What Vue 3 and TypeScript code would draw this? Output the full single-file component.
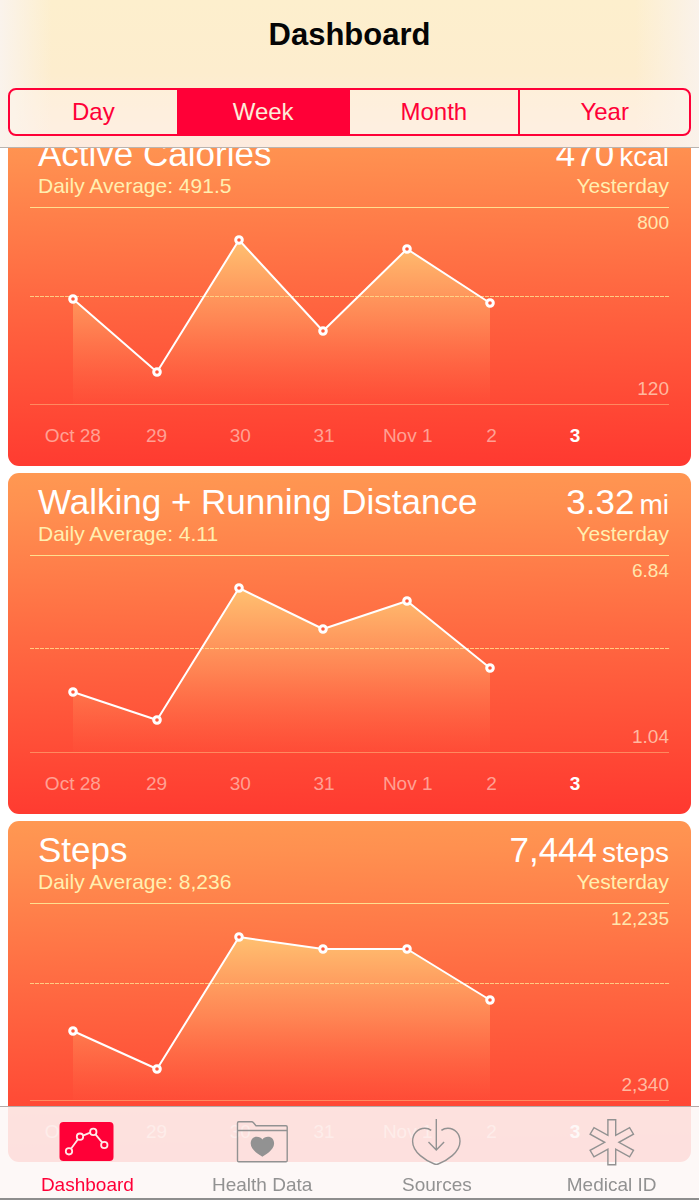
<script setup lang="ts">
import { ref } from 'vue'

interface Metric {
  id: string
  name: string
  average: string
  value: string
  unit: string
  max: string
  min: string
  averageLevel: number
  levels: number[]
}

const ranges = ['Day', 'Week', 'Month', 'Year']
const activeRange = ref('Week')
const activeTab = ref('dashboard')

const days = ['Oct 28', '29', '30', '31', 'Nov 1', '2', '3']
const dayX = [43, 127, 209, 293, 377, 460]
const chartHeight = 196

const metrics: Metric[] = [
  {
    id: 'calories', name: 'Active Calories', average: '491.5', value: '470', unit: 'kcal',
    max: '800', min: '120', averageLevel: 88.5, levels: [91, 164, 32, 123, 41, 95],
  },
  {
    id: 'distance', name: 'Walking + Running Distance', average: '4.11', value: '3.32', unit: 'mi',
    max: '6.84', min: '1.04', averageLevel: 92.5, levels: [136, 164, 32, 73, 45, 112],
  },
  {
    id: 'steps', name: 'Steps', average: '8,236', value: '7,444', unit: 'steps',
    max: '12,235', min: '2,340', averageLevel: 79.5, levels: [127, 165, 33, 45, 45, 96],
  },
]

function linePoints(levels: number[]): string {
  return levels.map((y, i) => `${dayX[i]},${y}`).join(' ')
}

function areaPoints(levels: number[]): string {
  const last = dayX[levels.length - 1]
  return `${dayX[0]},${chartHeight} ${linePoints(levels)} ${last},${chartHeight}`
}
</script>

<template>
  <div class="screen">
    <header class="top-bar">
      <h1 class="title">Dashboard</h1>
      <div class="segments" role="group" aria-label="Time range">
        <button
          v-for="range in ranges"
          :key="range"
          type="button"
          class="segment"
          :class="{ active: range === activeRange }"
          :aria-pressed="range === activeRange"
          @click="activeRange = range"
        >{{ range }}</button>
      </div>
    </header>

    <main class="cards">
      <article v-for="metric in metrics" :key="metric.id" class="card">
        <div class="card-head">
          <h2 class="name">{{ metric.name }}</h2>
          <p class="value">{{ metric.value }}<span class="unit">{{ metric.unit }}</span></p>
          <p class="note">Daily Average: {{ metric.average }}</p>
          <p class="note end">Yesterday</p>
        </div>
        <div class="chart">
          <svg class="plot" :viewBox="`0 0 639 ${chartHeight}`" role="img" :aria-label="metric.name">
            <defs>
              <linearGradient :id="`fill-${metric.id}`" gradientUnits="userSpaceOnUse" x1="0" y1="32" x2="0" :y2="chartHeight">
                <stop offset="0" stop-color="#ffc573" stop-opacity="0.95" />
                <stop offset="0.5" stop-color="#ffa868" stop-opacity="0.5" />
                <stop offset="1" stop-color="#ff7a50" stop-opacity="0.04" />
              </linearGradient>
            </defs>
            <polygon :points="areaPoints(metric.levels)" :fill="`url(#fill-${metric.id})`" />
            <line class="average" x1="0" x2="639" :y1="metric.averageLevel" :y2="metric.averageLevel" />
            <polyline class="trend" :points="linePoints(metric.levels)" />
            <circle v-for="(y, i) in metric.levels" :key="i" class="dot" :cx="dayX[i]" :cy="y" r="3.3" />
          </svg>
          <div class="scale">
            <span class="max">{{ metric.max }}</span>
            <span class="min">{{ metric.min }}</span>
          </div>
        </div>
        <ol class="days">
          <li v-for="(day, i) in days" :key="day" :class="{ today: i === days.length - 1 }">{{ day }}</li>
        </ol>
      </article>
    </main>

    <nav class="tab-bar" aria-label="Sections">
      <a href="#dashboard" class="tab" :class="{ active: activeTab === 'dashboard' }" @click="activeTab = 'dashboard'">
        <svg class="icon" viewBox="0 0 56 50" aria-hidden="true">
          <rect x="0.5" y="5" width="54" height="39" rx="4" fill="currentColor" />
          <g fill="none" stroke="#ffe9e8" stroke-width="1.8">
            <path d="M12 31.7 19 22.3M24 18.7 31.2 15.7M36.3 17.2 43.3 25.6" />
            <circle cx="10" cy="34.3" r="3.2" />
            <circle cx="21" cy="19.7" r="3.2" />
            <circle cx="34.3" cy="14.9" r="3.2" />
            <circle cx="45.3" cy="28" r="3.2" />
          </g>
        </svg>
        <span>Dashboard</span>
      </a>
      <a href="#health-data" class="tab" :class="{ active: activeTab === 'health' }" @click="activeTab = 'health'">
        <svg class="icon" viewBox="0 0 56 50" aria-hidden="true">
          <path class="stroke" d="M3.5 43.5V6a1.2 1.2 0 0 1 1.2-1.2H17.6q1.2 0 1.9 1L22 8.8H52a1.2 1.2 0 0 1 1.2 1.2V43.5a1.2 1.2 0 0 1-1.2 1.2H4.7A1.2 1.2 0 0 1 3.5 43.5ZM3.5 13.5H53.2" />
          <path fill="currentColor" d="M28.4 39.8C26.5 38.4 16.7 33.5 16.7 26.6C16.7 22.5 19.3 19.8 22.8 19.8C25.2 19.8 27.2 20.8 28.4 22.4C29.6 20.8 31.6 19.8 34 19.8C37.5 19.8 40.1 22.5 40.1 26.6C40.1 33.5 30.3 38.4 28.4 39.8Z" />
        </svg>
        <span>Health Data</span>
      </a>
      <a href="#sources" class="tab" :class="{ active: activeTab === 'sources' }" @click="activeTab = 'sources'">
        <svg class="icon" viewBox="0 0 56 50" aria-hidden="true">
          <path class="stroke" d="M22.2 13.4C20.5 12 18.2 11.2 15.7 11.2C8.8 11.2 3.6 16.8 3.6 24.2C3.6 35.5 17 43.8 25.4 47Q27.3 47.8 29.2 47C37.6 43.8 51 35.5 51 24.2C51 16.8 45.8 11.2 38.9 11.2C36.4 11.2 34.1 12 32.4 13.4" />
          <path class="stroke" d="M27.3 2V33M19.5 25 27.3 33 35.1 25" />
        </svg>
        <span>Sources</span>
      </a>
      <a href="#medical-id" class="tab" :class="{ active: activeTab === 'medical' }" @click="activeTab = 'medical'">
        <svg class="icon" viewBox="0 0 56 50" aria-hidden="true">
          <path class="stroke" d="M23.9 2.7H31.7V18.4L45.6 10.7 49.5 17.2 34.9 25.3 49.5 33.3 45.6 39.9 31.7 32.1V47.7H23.9V32.1L10 39.9 6.1 33.3 20.7 25.3 6.1 17.2 10 10.7 23.9 18.4Z" />
        </svg>
        <span>Medical ID</span>
      </a>
    </nav>
  </div>
</template>

<style>
html,
body {
  margin: 0;
  background: #fff;
}
</style>

<style scoped>
.screen {
  min-height: 100vh;
  background: #fff;
  font-family: "Liberation Sans", Arial, sans-serif;
}

.top-bar {
  position: sticky;
  top: 0;
  z-index: 2;
  box-sizing: border-box;
  padding: 15px 8px 11px;
  border-bottom: 1px solid #b9b4b0;
  background:
    linear-gradient(90deg, #faf3ec 0, rgba(250, 243, 236, 0) 52px calc(100% - 64px), #faf2ea 100%),
    linear-gradient(#fdefcd 0, #fdedce 50%, #fdebdf 100%);
}

.title {
  margin: 0 0 33px;
  color: #050505;
  font-size: 31px;
  line-height: 40px;
  font-weight: 700;
  text-align: center;
}

.segments {
  display: grid;
  grid-template-columns: repeat(4, 1fr);
}

.segment {
  height: 48px;
  margin: 0 0 0 -2px;
  padding: 0;
  border: 2px solid #ff0037;
  background: rgba(255, 245, 235, 0.35);
  color: #ff0037;
  font: inherit;
  font-size: 24px;
  cursor: pointer;
}

.segment:first-child {
  margin-left: 0;
  border-radius: 8px 0 0 8px;
}

.segment:last-child {
  border-radius: 0 8px 8px 0;
}

.segment.active {
  background: #ff0037;
  color: #fdecd8;
}

.cards {
  display: grid;
  gap: 7px;
  margin-top: -23px;
  padding: 0 8px 38px;
}

.card {
  padding: 11px 22px 18px;
  border-radius: 11px;
  background: linear-gradient(179deg, #ff9852 0%, #ff9050 10%, #ff6a42 47%, #ff4634 85%, #ff3830 100%);
  color: #fff;
}

.card-head {
  display: grid;
  grid-template-columns: 1fr auto;
  padding: 0 0 7px 8px;
}

.name,
.value {
  margin: 0;
  font-size: 35px;
  line-height: 36px;
  font-weight: 400;
}

.value,
.end {
  text-align: right;
}

.unit {
  margin-left: 5px;
  font-size: 28px;
  line-height: 28px;
}

.note {
  margin: 0;
  color: #ffefb0;
  font-size: 21px;
  line-height: 28px;
}

.chart {
  display: grid;
  border-top: 1px solid #ffdf8f;
  border-bottom: 1px solid rgba(255, 190, 130, 0.55);
}

.plot,
.scale {
  grid-area: 1 / 1;
}

.plot {
  display: block;
  width: 100%;
  height: auto;
}

.average {
  stroke: #ffdd8e;
  stroke-width: 1;
  stroke-dasharray: 4 1;
  opacity: 0.85;
}

.trend {
  fill: none;
  stroke: #fff;
  stroke-width: 2;
  stroke-linejoin: round;
}

.dot {
  fill: #ff5a3c;
  stroke: #fff;
  stroke-width: 3;
}

.scale {
  display: flex;
  flex-direction: column;
  justify-content: space-between;
  padding: 3px 0;
  font-size: 19px;
  line-height: 24px;
  text-align: right;
}

.max {
  color: #ffe6ae;
}

.min {
  color: #ffb9a0;
}

.days {
  display: grid;
  grid-template-columns: repeat(7, 1fr);
  margin: 19px 52px 0 1px;
  padding: 0;
  list-style: none;
  color: rgba(255, 225, 215, 0.6);
  font-size: 19px;
  line-height: 24px;
  text-align: center;
  white-space: nowrap;
}

.today {
  color: #fff;
  font-weight: 700;
}

.tab-bar {
  position: fixed;
  right: 0;
  bottom: 0;
  left: 0;
  z-index: 2;
  display: grid;
  grid-template-columns: repeat(4, 1fr);
  padding: 10px 0 1px;
  border-top: 1px solid #b5aaa8;
  border-bottom: 2px solid #8e8e8e;
  background: rgba(253, 247, 246, 0.88);
}

.tab {
  display: grid;
  justify-items: center;
  gap: 6px;
  color: #929292;
  font-size: 19px;
  line-height: 24px;
  text-decoration: none;
}

.tab.active {
  color: #ff0037;
}

.icon {
  width: 56px;
  height: 50px;
}

.stroke {
  fill: none;
  stroke: currentColor;
  stroke-width: 1.4;
}
</style>
